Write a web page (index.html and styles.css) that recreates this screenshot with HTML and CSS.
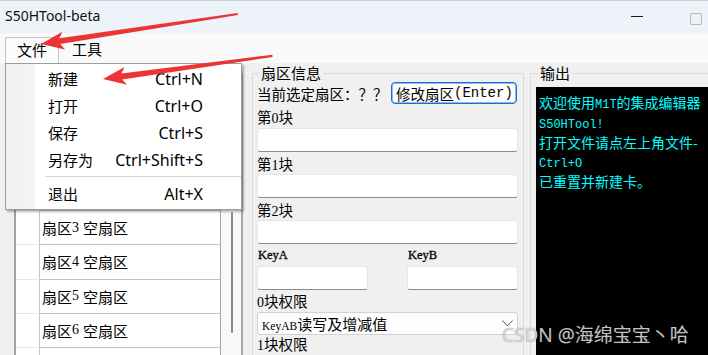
FILE: index.html
```html
<!DOCTYPE html>
<html lang="zh-CN">
<head>
<meta charset="utf-8">
<title>S50HTool-beta</title>
<link rel="stylesheet" href="styles.css">
</head>
<body>
<div class="window">
  <header class="titlebar">
    <span class="title">S50HTool-beta</span>
    <div class="controls">
      <span class="win-min"></span>
      <span class="win-max"></span>
    </div>
  </header>
  <nav class="menubar">
    <span class="menu-item active">文件</span>
    <span class="menu-item">工具</span>
  </nav>
  <main class="main">
    <section class="left">
      <div class="listbox">
        <div class="list">
          <div class="list-head"></div>
          <div class="row"><span class="idx"></span><span class="name"></span></div>
          <div class="row"><span class="idx"></span><span class="name"></span></div>
          <div class="row"><span class="idx"></span><span class="name"></span></div>
          <div class="row"><span class="idx"></span><span class="name">扇区<span class="lat">3</span> 空扇区</span></div>
          <div class="row"><span class="idx"></span><span class="name">扇区<span class="lat">4</span> 空扇区</span></div>
          <div class="row"><span class="idx"></span><span class="name">扇区<span class="lat">5</span> 空扇区</span></div>
          <div class="row"><span class="idx"></span><span class="name">扇区<span class="lat">6</span> 空扇区</span></div>
          <div class="row"><span class="idx"></span><span class="name"></span></div>
        </div>
        <div class="scroll"><span class="thumb"></span></div>
      </div>
    </section>

    <fieldset class="group info">
      <legend>扇区信息</legend>
      <div class="current">
        <span class="cur-label">当前选定扇区：？？</span>
        <span class="btn">修改扇区<span class="mono">(Enter)</span></span>
      </div>
      <div class="lbl first">第<span class="lat">0</span>块</div>
      <div class="inp"></div>
      <div class="lbl">第<span class="lat">1</span>块</div>
      <div class="inp"></div>
      <div class="lbl">第<span class="lat">2</span>块</div>
      <div class="inp"></div>
      <div class="keys">
        <span class="key-lbl">KeyA</span>
        <span class="key-lbl">KeyB</span>
        <div class="inp"></div>
        <div class="inp"></div>
      </div>
      <div class="lbl perm"><span class="lat">0</span>块权限</div>
      <div class="select">
        <span class="sel-text"><span class="lat small">KeyAB</span>读写及增减值</span>
        <svg class="chev" width="11" height="7" viewBox="0 0 11 7"><polyline points="0.5,0.5 5.5,6 10.5,0.5" fill="none" stroke="#555" stroke-width="1"/></svg>
      </div>
      <div class="lbl perm2"><span class="lat">1</span>块权限</div>
    </fieldset>

    <fieldset class="group output">
      <legend>输出</legend>
      <div class="console">
        <div class="cline">欢迎使用<span class="cl">M1T</span>的集成编辑器</div>
        <div class="cline"><span class="cl">S50HTool!</span></div>
        <div class="cline">打开文件请点左上角文件-</div>
        <div class="cline"><span class="cl">Ctrl+O</span></div>
        <div class="cline">已重置并新建卡。</div>
      </div>
    </fieldset>
  </main>

  <div class="dropdown">
    <div class="mi"><span>新建</span><span class="sc">Ctrl+N</span></div>
    <div class="mi"><span>打开</span><span class="sc">Ctrl+O</span></div>
    <div class="mi"><span>保存</span><span class="sc">Ctrl+S</span></div>
    <div class="mi"><span>另存为</span><span class="sc">Ctrl+Shift+S</span></div>
    <div class="sep"></div>
    <div class="mi"><span>退出</span><span class="sc">Alt+X</span></div>
  </div>

  <svg class="arrows" width="708" height="355" viewBox="0 0 708 355">
    <polygon transform="translate(41 44) rotate(-8.66)" points="0,0 23,-9 19,-3 199,-1.1 199,1.1 19,3 23,9" fill="#ec3434"/>
    <polygon transform="translate(103 79) rotate(-7.75)" points="0,0 23,-9 19,-3 171,-1.1 171,1.1 19,3 23,9" fill="#ec3434"/>
  </svg>

  <div class="watermark">CSDN @海绵宝宝丶哈</div>
</div>
</body>
</html>
```

FILE: styles.css
```css
* { box-sizing: border-box; }

html, body {
  margin: 0;
  padding: 0;
}

body {
  width: 708px;
  height: 355px;
  overflow: hidden;
  background: #f0f0f0;
  color: #000;
  font-family: "Noto Sans", "Noto Sans CJK SC", sans-serif;
}

.window {
  position: relative;
  width: 708px;
  height: 355px;
  overflow: hidden;
  display: flex;
  flex-direction: column;
}

/* title bar */
.titlebar {
  flex: 0 0 33px;
  height: 33px;
  background: #eef2f9;
  border-top: 1px solid #cdd0d6;
  display: flex;
  align-items: center;
  justify-content: space-between;
  padding-left: 5px;
}

.title {
  font-size: 14px;
  line-height: 18px;
  padding-bottom: 2px;
  color: #111;
}

.controls {
  display: flex;
  align-items: center;
}

.win-min {
  width: 12px;
  height: 1px;
  background: #1a1a1a;
  margin-right: 47px;
  margin-bottom: 1px;
}

.win-max {
  width: 12px;
  height: 12px;
  border: 1px solid #b8b8b8;
  border-radius: 2px;
  margin-right: 6px;
  margin-top: 3px;
}

/* menu bar */
.menubar {
  flex: 0 0 30px;
  height: 30px;
  background: #f9f9f9;
  display: flex;
  align-items: flex-end;
  padding-left: 5px;
}

.menu-item {
  font-size: 15px;
  line-height: 22px;
  height: 26px;
  padding: 1px 13px 3px 13px;
}

.menu-item.active {
  width: 54px;
  padding: 1px 0 3px 0;
  text-align: center;
  border: 1px solid #c4c4c4;
  border-bottom: none;
  background: #fbfbfb;
}

/* main area */
.main {
  flex: 1;
  display: flex;
  align-items: flex-start;
  min-height: 0;
}

.left {
  flex: 0 0 243px;
  width: 243px;
  padding: 10px 0 0 14px;
  display: flex;
}

.listbox {
  flex: 1;
  display: flex;
  height: 300px;
  border-left: 2px solid #a2a2a2;
  border-right: 2px solid #a8a8a8;
  border-top: 1px solid #a8a8a8;
  background: #fff;
}

.list {
  width: 205px;
  flex: 0 0 205px;
}

.list-head {
  height: 34.25px;
  border-bottom: 1px solid #c4c4c4;
  border-right: 1px solid #a8a8a8;
}

.row {
  display: flex;
  height: 34.25px;
}

.idx {
  width: 24px;
  flex: 0 0 24px;
  border-right: 1px solid #c6c6c6;
  border-bottom: 1px solid #e8e8e8;
}

.name {
  flex: 1;
  display: flex;
  align-items: center;
  padding-left: 2px;
  border-bottom: 1px solid #c4c4c4;
  border-right: 1px solid #a8a8a8;
  font-size: 15px;
  white-space: pre;
}

.lat {
  font-family: "Liberation Serif", serif;
  font-size: 14px;
}

.lat.small {
  font-size: 11.5px;
}

.scroll {
  flex: 1;
  background: #f8f8f8;
}

.thumb {
  display: block;
  width: 2px;
  height: 121px;
  margin: 138px 0 0 10px;
  background: #8a8a8a;
  border-radius: 1px;
}

/* group boxes */
.group {
  margin: 0;
  min-width: 0;
  border: 1px solid #dadada;
}

.group legend {
  font-size: 15px;
  line-height: 20px;
  height: 20px;
  padding: 0 2px;
  margin-left: 2px;
}

.info {
  flex: 0 0 272px;
  width: 272px;
  height: 300px;
  margin-left: 9px;
  padding: 0 5px 0 4px;
}

.current {
  display: flex;
  align-items: center;
  justify-content: space-between;
  height: 22px;
  margin-top: -1px;
}

.cur-label {
  font-size: 14.5px;
  white-space: nowrap;
}

.btn {
  width: 126px;
  height: 22px;
  margin-right: 1px;
  display: flex;
  align-items: center;
  padding-left: 4px;
  font-size: 14.5px;
  background: #fff;
  border: 1px solid #1c6fd0;
  box-shadow: inset 0 0 0 1px #8fb8ea;
  border-radius: 4px;
  white-space: nowrap;
}

.mono {
  font-family: "Liberation Mono", monospace;
  font-size: 14px;
}

.lbl {
  font-size: 14.5px;
  line-height: 20px;
  height: 20px;
  margin-top: 2px;
  white-space: nowrap;
}

.lbl.first { margin-top: 3px; margin-bottom: 1px; }
.lbl.perm { margin-top: 1px; margin-bottom: 1px; }
.lbl.perm2 { margin-top: -1px; }

.inp {
  height: 24px;
  background: #fff;
  border: 1px solid #e6e6e6;
  border-bottom: 1px solid #8c8c8c;
  border-radius: 3px;
}

.keys {
  display: grid;
  grid-template-columns: 111px 111px;
  grid-template-rows: 21px 24px;
  justify-content: space-between;
  margin-top: 1px;
}

.key-lbl {
  font-family: "Liberation Serif", serif;
  font-size: 12.5px;
  line-height: 21px;
  padding-left: 1px;
  color: #000;
  -webkit-text-stroke: 0.3px #000;
}

.select {
  height: 23px;
  background: #fdfdfd;
  border: 1px solid #d2d2d2;
  border-radius: 3px;
  display: flex;
  align-items: center;
  justify-content: space-between;
  padding: 0 4px 0 4px;
  font-size: 15px;
  white-space: nowrap;
}

.sel-text {
  line-height: 20px;
  height: 20px;
}

.chev { display: block; }

/* output */
.output {
  flex: 0 0 200px;
  width: 200px;
  height: 300px;
  margin-left: 6px;
  padding: 4px 0 0 5px;
}

.console {
  height: 280px;
  background: #000;
  color: #00ffff;
  font-size: 14px;
  padding: 6px 0 0 3px;
  white-space: nowrap;
  overflow: hidden;
  font-family: "Noto Sans CJK SC", sans-serif;
}

.cline {
  height: 19.8px;
  line-height: 19.8px;
}

.cl {
  font-family: "Liberation Mono", monospace;
  font-size: 12px;
}

/* dropdown menu (overlay) */
.dropdown {
  position: absolute;
  left: 5px;
  top: 63px;
  width: 237px;
  height: 147px;
  border: 1px solid #9c9c9c;
  background: linear-gradient(to right, #f1f1f1 0, #f4f4f4 29px, #fff 29px);
  box-shadow: 2px 2px 2px rgba(0, 0, 0, 0.28);
  padding: 1px 0 2px 0;
}

.mi {
  height: 27px;
  display: flex;
  align-items: center;
  justify-content: space-between;
  padding: 0 38px 0 42px;
  font-size: 15px;
}

.sc {
  font-family: "Noto Sans", sans-serif;
  font-size: 16px;
}

.sep {
  margin: 3px 0 3px 39px;
  border-top: 1px solid #d6d6d6;
}

/* annotation arrows (overlay) */
.arrows {
  position: absolute;
  left: 0;
  top: 0;
  pointer-events: none;
}

.watermark {
  position: absolute;
  left: 502px;
  top: 322px;
  font-size: 19px;
  line-height: 26px;
  color: rgba(240, 240, 240, 0.78);
  text-shadow: 0 0 1px rgba(60, 60, 60, 0.7);
  white-space: nowrap;
  pointer-events: none;
}
```
